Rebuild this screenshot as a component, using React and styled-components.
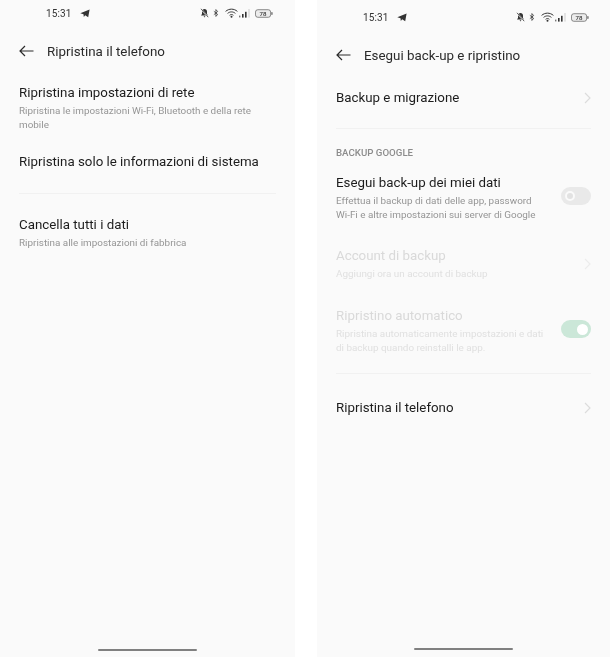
import React from "react";
import styled, { createGlobalStyle } from "styled-components";

const GlobalStyle = createGlobalStyle`
  html, body {
    margin: 0;
    padding: 0;
    background: #fff;
  }
  body {
    font-family: Roboto, "Liberation Sans", sans-serif;
  }
`;

const Screens = styled.div`
  display: flex;
  justify-content: space-between;
  width: 610px;
  height: 657px;
  overflow: hidden;
`;

const Phone = styled.div`
  width: ${props => props.$width}px;
  height: 657px;
  background: #fafafa;
  display: flex;
  flex-direction: column;
  padding-top: ${props => props.$top}px;
  box-sizing: border-box;
`;

const StatusBar = styled.div`
  display: flex;
  align-items: center;
  height: 14px;
  padding: 0 ${props => props.$right}px 0 ${props => props.$left}px;
  color: #333;
  font-size: 10px;
  filter: blur(0.3px);
`;

const Clock = styled.span`
  margin-right: 9px;
  letter-spacing: 0.1px;
`;

const StatusIcons = styled.div`
  margin-left: auto;
  display: flex;
  align-items: center;
`;

const StatusIcon = styled.svg`
  display: block;
  flex: none;
  margin-left: ${props => props.$gap || 0}px;
`;

const Header = styled.div`
  display: flex;
  align-items: center;
  height: 20px;
  margin-top: 21px;
  padding-left: 19px;
  margin-bottom: ${props => props.$bottom}px;
  color: #2b2b2b;
  font-size: 13.35px;
  filter: blur(0.25px);
`;

const BackIcon = styled.svg`
  width: 15px;
  height: 12px;
  margin-right: 13px;
  flex: none;
`;

const Row = styled.div`
  display: flex;
  align-items: center;
  justify-content: space-between;
  padding: 0 19px;
  margin-bottom: ${props => props.$bottom || 0}px;
  filter: blur(0.25px);
`;

const RowText = styled.div`
  display: flex;
  flex-direction: column;
`;

const Title = styled.div`
  font-size: 13.3px;
  line-height: 18px;
  color: ${props => (props.$disabled ? "#d9d9d9" : "#1d1d1d")};
`;

const Sub = styled.div`
  font-size: 9.9px;
  line-height: 13.5px;
  margin-top: 2px;
  width: ${props => props.$width || 240}px;
  color: ${props => (props.$disabled ? "#e0e0e0" : "#959595")};
`;

const Divider = styled.div`
  height: 1px;
  margin: 0 19px;
  background: #f1f1f1;
  margin-bottom: ${props => props.$bottom}px;
`;

const Chevron = styled.svg`
  width: 7px;
  height: 12px;
  flex: none;
`;

const SectionLabel = styled.div`
  padding-left: 19px;
  font-size: 9.7px;
  font-weight: 500;
  line-height: 12px;
  color: #8c8c8c;
  margin-bottom: 15px;
  filter: blur(0.25px);
`;

const Switch = styled.div`
  position: relative;
  width: 30px;
  height: 18px;
  border-radius: 9px;
  flex: none;
  margin-bottom: 3px;
  background: ${props => (props.$on ? "#cbe7d8" : "#e9e9e9")};
`;

const Knob = styled.div`
  position: absolute;
  top: ${props => (props.$on ? 3.5 : 4)}px;
  left: ${props => (props.$on ? 16 : 4)}px;
  box-sizing: border-box;
  width: ${props => (props.$on ? 11 : 10)}px;
  height: ${props => (props.$on ? 11 : 10)}px;
  border-radius: 50%;
  background: ${props => (props.$on ? "#fff" : "#e2e2e2")};
  border: ${props => (props.$on ? "none" : "2.5px solid #fafafa")};
`;

const Spacer = styled.div`
  flex: 1;
`;

const HomeBar = styled.div`
  width: 99px;
  height: 2.5px;
  background: #808080;
  border-radius: 2px;
  margin-left: ${props => props.$left}px;
  margin-bottom: ${props => props.$bottom}px;
`;

const Back = () => (
  <BackIcon viewBox="0 0 15 12" fill="none" stroke="#2b2b2b" strokeWidth="1.2">
    <path d="M14.5 6H1M6 1 1 6l5 5" />
  </BackIcon>
);

const Next = ({ disabled }) => (
  <Chevron viewBox="0 0 7 12" fill="none" stroke={disabled ? "#ececec" : "#dcdcdc"} strokeWidth="1.2">
    <path d="m1 1 5 5-5 5" />
  </Chevron>
);

const Status = ({ left, right }) => (
  <StatusBar $left={left} $right={right}>
    <Clock>15:31</Clock>
    {/* telegram arrow */}
    <svg width="10" height="9" viewBox="0 0 10 9">
      <path d="M9.6.4 8.2 8.2 5.2 6.3 3.8 7.9 3.5 5.3.3 4.3z" fill="#333" />
    </svg>
    <StatusIcons>
      {/* muted bell */}
      <StatusIcon width="9" height="10" viewBox="0 0 9 10">
        <path d="M4.5 1C3 1 2 2.2 2 3.6V6L1 7.4h7L7 6V3.6C7 2.2 6 1 4.5 1zM3.6 8.2h1.8L4.5 9.4z" fill="#333" />
        <path d="m1 1 7 8" stroke="#fafafa" strokeWidth="1.4" />
        <path d="m1 .8 7.2 8.4" stroke="#333" strokeWidth=".8" />
      </StatusIcon>
      {/* bluetooth */}
      <StatusIcon $gap={4} width="6" height="10" viewBox="0 0 7 10" fill="none" stroke="#333" strokeWidth=".9">
        <path d="M1 3l4.4 3.6L3.4 9V1l2 2.3L1 7" />
      </StatusIcon>
      {/* wifi */}
      <StatusIcon $gap={6} width="13" height="10" viewBox="0 0 13 10" fill="none">
        <g stroke="#333" strokeWidth="1">
          <path d="M.6 3.4c3.4-3 8.4-3 11.8 0" />
          <path d="M2.6 5.4c2.3-2 5.5-2 7.8 0" />
          <path d="M4.6 7.3c1.2-1 2.6-1 3.8 0" />
        </g>
        <circle cx="6.5" cy="8.8" r="1" fill="#333" />
      </StatusIcon>
      {/* signal */}
      <StatusIcon $gap={1} width="11" height="10" viewBox="0 0 11 10">
        <rect x="0" y="7.6" width="1.4" height="1.8" fill="#777" />
        <rect x="3" y="6" width="1.6" height="3.6" fill="#333" />
        <rect x="6" y="3.8" width="1.6" height="5.8" fill="#333" />
        <rect x="9.4" y="1" width="1.2" height="8.6" fill="#d4d4d4" />
      </StatusIcon>
      {/* battery */}
      <StatusIcon $gap={5} width="18" height="9" viewBox="0 0 19 9">
        <rect x=".5" y=".5" width="16" height="8" rx="2.5" fill="#ececec" stroke="#666" strokeWidth=".8" />
        <rect x="17.3" y="3" width="1.2" height="3" rx=".6" fill="#555" />
        <text x="8.5" y="6.8" textAnchor="middle" fontSize="6.5" fontWeight="500" fill="#333" fontFamily="Roboto, sans-serif">78</text>
      </StatusIcon>
    </StatusIcons>
  </StatusBar>
);

export default function App() {
  return (
    <>
      <GlobalStyle />
      <Screens>
        <Phone $width={295} $top={6}>
          <Status left={46} right={22} />
          <Header $bottom={23}>
            <Back />
            Ripristina il telefono
          </Header>
          <Row $bottom={22}>
            <RowText>
              <Title>Ripristina impostazioni di rete</Title>
              <Sub>Ripristina le impostazioni Wi-Fi, Bluetooth e della rete mobile</Sub>
            </RowText>
          </Row>
          <Row $bottom={22}>
            <RowText>
              <Title>Ripristina solo le informazioni di sistema</Title>
            </RowText>
          </Row>
          <Divider $bottom={22} />
          <Row>
            <RowText>
              <Title>Cancella tutti i dati</Title>
              <Sub>Ripristina alle impostazioni di fabbrica</Sub>
            </RowText>
          </Row>
          <Spacer />
          <HomeBar $left={98} $bottom={6} />
        </Phone>
        <Phone $width={293} $top={10}>
          <Status left={46} right={21} />
          <Header $bottom={24}>
            <Back />
            Esegui back-up e ripristino
          </Header>
          <Row $bottom={21}>
            <Title>Backup e migrazione</Title>
            <Next />
          </Row>
          <Divider $bottom={18} />
          <SectionLabel>BACKUP GOOGLE</SectionLabel>
          <Row $bottom={26}>
            <RowText>
              <Title>Esegui back-up dei miei dati</Title>
              <Sub $width={205}>Effettua il backup di dati delle app, password Wi-Fi e altre impostazioni sui server di Google</Sub>
            </RowText>
            <Switch>
              <Knob />
            </Switch>
          </Row>
          <Row $bottom={26.5}>
            <RowText>
              <Title $disabled>Account di backup</Title>
              <Sub $disabled $width={205}>Aggiungi ora un account di backup</Sub>
            </RowText>
            <Next disabled />
          </Row>
          <Row $bottom={19}>
            <RowText>
              <Title $disabled>Ripristino automatico</Title>
              <Sub $disabled $width={215}>Ripristina automaticamente impostazioni e dati di backup quando reinstalli le app.</Sub>
            </RowText>
            <Switch $on>
              <Knob $on />
            </Switch>
          </Row>
          <Divider $bottom={25} />
          <Row>
            <Title>Ripristina il telefono</Title>
            <Next />
          </Row>
          <Spacer />
          <HomeBar $left={97} $bottom={7} />
        </Phone>
      </Screens>
    </>
  );
}
